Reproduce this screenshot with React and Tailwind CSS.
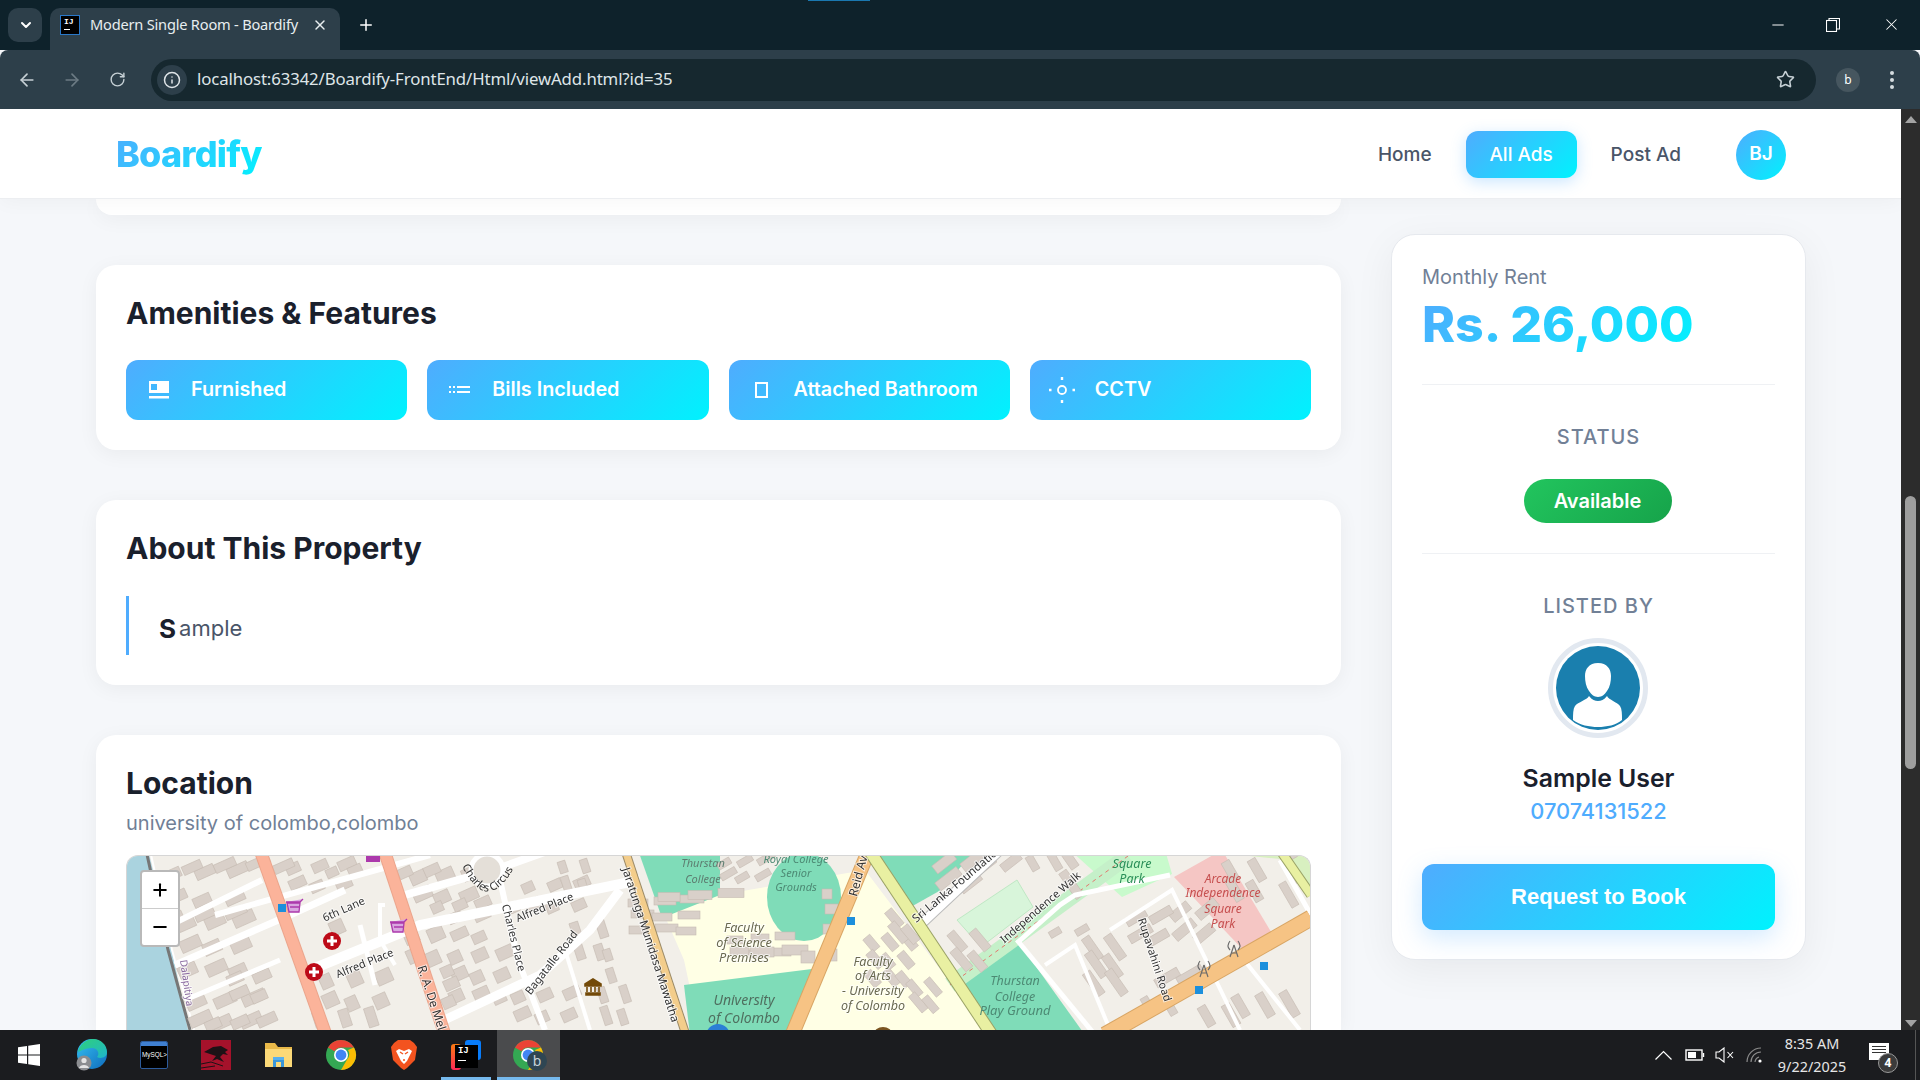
import { ArrowLeft, ArrowRight, ChevronDown, Info, Minus, Plus, RotateCw, Star, X } from "lucide-react";

const GRADIENT = "bg-[linear-gradient(135deg,#4facfe_0%,#00f2fe_100%)]";

export default function App() {
  return (
    <div className="flex h-screen w-[1920px] flex-col overflow-hidden bg-[#f5f7fa] font-['Inter',sans-serif]">
      <TabStrip />
      <Toolbar />
      <div className="flex min-h-0 flex-1">
        <div className="flex min-w-0 flex-1 flex-col overflow-hidden">
          <Navbar />
          <PageBody />
        </div>
        <Scrollbar />
      </div>
      <Taskbar />
    </div>
  );
}

function TabStrip() {
  return (
    <div className="relative flex h-[50px] shrink-0 items-end bg-[#0e222b] pl-2 font-['Noto_Sans',sans-serif] text-white">
      <div className="absolute left-[808px] top-0 h-px w-[62px] bg-[#1a78b0]" />
      <div className="mb-2 flex h-[34px] w-[34px] items-center justify-center rounded-[10px] bg-[#2d3f4a] pl-[2px]">
        <ChevronDown size={16} strokeWidth={3} />
      </div>
      <div className="ml-2 flex h-[42px] w-[290px] items-center rounded-t-[10px] bg-[#2d3f4a] pb-[8px] pl-[10px]">
        <IjFavicon />
        <span className="ml-[10px] w-[222px] whitespace-nowrap text-[14.6px] tracking-[-0.2px] text-[#e8eef0]">
          Modern Single Room - Boardify
        </span>
        <X size={16} strokeWidth={2.2} className="text-[#e8eef0]" />
      </div>
      <Plus size={18} strokeWidth={2} className="mb-[16px] ml-[17px]" />
      <div className="mb-[16px] ml-auto flex items-center">
        <Minus size={18} strokeWidth={1.3} className="mr-[39px]" />
        <svg width="14" height="14" viewBox="0 0 14 14" fill="none" stroke="white" strokeWidth="1.1" className="mr-[42px]">
          <rect x="0.5" y="2.5" width="10" height="11" />
          <path d="M3 2.5V0.5H13.5V11H10.5" />
        </svg>
        <X size={19} strokeWidth={1.3} className="mr-[19px]" />
      </div>
    </div>
  );
}

function IjFavicon() {
  return (
    <div className="flex h-5 w-5 flex-col border border-[#2a78c8] bg-black px-[3px] pt-px">
      <span className="font-['Liberation_Mono',monospace] text-[8px] font-bold leading-[9px] text-white">IJ</span>
      <span className="mt-[3px] h-px w-[6px] bg-white" />
    </div>
  );
}

function Toolbar() {
  return (
    <div className="flex h-[59px] shrink-0 items-center rounded-t-[8px] bg-[#2d3f4a] font-['Noto_Sans',sans-serif]">
      <ArrowLeft size={20} strokeWidth={2} className="ml-[17px] text-[#c6d0d5]" />
      <ArrowRight size={20} strokeWidth={2} className="ml-[25px] text-[#6c7b84]" />
      <RotateCw size={17} strokeWidth={2} className="ml-[27px] text-[#c6d0d5]" />
      <div className="ml-[25px] flex h-[42px] w-[1665px] items-center rounded-full bg-[#16282f] pl-[6px]">
        <div className="flex h-[30px] w-[30px] items-center justify-center rounded-full bg-[#2d3f4a]">
          <Info size={18} strokeWidth={2} className="text-[#dfe5e8]" />
        </div>
        <span className="ml-[10px] whitespace-nowrap pb-[2px] text-[16.8px] tracking-[-0.12px] text-[#dfe5e8]">
          localhost:63342/Boardify-FrontEnd/Html/viewAdd.html?id=35
        </span>
        <Star size={19} strokeWidth={2} className="ml-auto mr-[21px] text-[#c6d0d5]" />
      </div>
      <div className="ml-[20px] flex h-6 w-6 items-center justify-center rounded-full bg-[#46565f] text-[12px] text-white">b</div>
      <div className="ml-[30px] flex flex-col gap-[3px]">
        <span className="h-[4px] w-[4px] rounded-full bg-[#d5dcdf]" />
        <span className="h-[4px] w-[4px] rounded-full bg-[#d5dcdf]" />
        <span className="h-[4px] w-[4px] rounded-full bg-[#d5dcdf]" />
      </div>
    </div>
  );
}

function Navbar() {
  return (
    <nav className="z-10 flex h-[90px] shrink-0 items-center border-b border-[#eceef1] bg-white pl-[116px] pr-[115px] pt-[2px] shadow-[0_2px_20px_rgba(0,0,0,0.04)]">
      <span className={`${GRADIENT} -mt-[2px] bg-clip-text text-[36px] font-extrabold tracking-[-0.8px] text-transparent`}>Boardify</span>
      <div className="ml-auto flex items-center text-[19px] font-medium text-[#4a5568]">
        <span className="pt-[2px]">Home</span>
        <span className={`${GRADIENT} ml-[34px] flex h-[47px] w-[111px] items-center justify-center rounded-[12px] pt-[2px] text-white shadow-[0_4px_15px_rgba(79,172,254,0.3)]`}>
          All Ads
        </span>
        <span className="ml-[34px] pt-[2px]">Post Ad</span>
        <span className={`${GRADIENT} ml-[55px] flex h-[50px] w-[50px] items-center justify-center rounded-full font-semibold text-white`}>BJ</span>
      </div>
    </nav>
  );
}

function PageBody() {
  return (
    <div className="flex min-h-0 flex-1 items-start pl-[96px]">
      <div className="flex w-[1245px] flex-col gap-[50px]">
        <div className="h-4 rounded-b-[20px] bg-white shadow-[0_4px_20px_rgba(0,0,0,0.05)]" />
        <Amenities />
        <About />
        <LocationCard />
      </div>
      <Sidebar />
    </div>
  );
}

function Card({ children }) {
  return <section className="rounded-[20px] bg-white p-[30px] shadow-[0_4px_20px_rgba(0,0,0,0.05)]">{children}</section>;
}

function Heading({ children }) {
  return <h2 className="h-[35px] text-[30px] font-bold leading-[36px] text-[#1a202c]">{children}</h2>;
}

function Amenities() {
  const items = [
    { name: "Furnished", icon: <FurnishedGlyph /> },
    { name: "Bills Included", icon: <BillsGlyph /> },
    { name: "Attached Bathroom", icon: <BathGlyph /> },
    { name: "CCTV", icon: <CctvGlyph /> },
  ];
  return (
    <Card>
      <Heading>Amenities &amp; Features</Heading>
      <div className="mt-[30px] grid grid-cols-4 gap-5">
        {items.map((x) => (
          <div key={x.name} className={`${GRADIENT} flex h-[60px] items-center rounded-[12px] text-[19.8px] font-semibold text-white`}>
            <span className="flex w-[65px] shrink-0 justify-center">{x.icon}</span>
            {x.name}
          </div>
        ))}
      </div>
    </Card>
  );
}

function FurnishedGlyph() {
  return (
    <svg width="20" height="18" viewBox="0 0 20 18" fill="white">
      <path fillRule="evenodd" d="M0 0H20V12H0ZM2 3V9H8V3Z" />
      <rect y="15" width="20" height="2.5" />
    </svg>
  );
}

function BillsGlyph() {
  return (
    <svg width="21" height="8" viewBox="0 0 21 8" fill="white">
      <rect x="0" y="0" width="2" height="2" />
      <rect x="0" y="5" width="2" height="2" />
      <rect x="4" y="0" width="2" height="2" />
      <rect x="4" y="5" width="2" height="2" />
      <rect x="8" y="0" width="13" height="2" />
      <rect x="8" y="5" width="13" height="2" />
    </svg>
  );
}

function BathGlyph() {
  return (
    <svg width="13" height="16" viewBox="0 0 13 16" fill="none" stroke="white" strokeWidth="2">
      <rect x="1" y="1" width="11" height="14" />
    </svg>
  );
}

function CctvGlyph() {
  return (
    <svg width="26" height="26" viewBox="0 0 26 26" fill="none" stroke="white">
      <circle cx="13" cy="13" r="4" strokeWidth="1.8" />
      <path d="M13 0V3M13 23V26M0 13H2.5M23.5 13H26" strokeWidth="2.4" />
    </svg>
  );
}

function About() {
  return (
    <Card>
      <Heading>About This Property</Heading>
      <div className="mt-[31px] flex h-[59px] items-center border-l-[3px] border-[#4facfe] pl-[30px] pt-[6px] text-[22px] text-[#4a5568]">
        <span className="mr-[3px] text-[26px] font-bold text-[#1a202c]">S</span>ample
      </div>
    </Card>
  );
}

function LocationCard() {
  return (
    <section className="rounded-t-[20px] bg-white px-[30px] pt-[30px] shadow-[0_4px_20px_rgba(0,0,0,0.05)]">
      <Heading>Location</Heading>
      <p className="mt-[10px] h-[26px] text-[20px] leading-[26px] text-[#718096]">university of colombo,colombo</p>
      <MapView />
    </section>
  );
}

function Sidebar() {
  return (
    <aside className="ml-[50px] mt-[35px] flex w-[415px] flex-col rounded-[24px] border border-[#e6e9ee] bg-white px-[30px] py-[29px] shadow-[0_10px_40px_rgba(0,0,0,0.06)]">
      <div className="h-[26px] text-[20px] leading-[26px] text-[#718096]">Monthly Rent</div>
      <div className={`${GRADIENT} mt-1 h-[60px] w-fit bg-clip-text text-[50px] font-extrabold leading-[60px] text-transparent`}>Rs. 26,000</div>
      <div className="mt-[30px] border-t border-[#eff1f4]" />
      <div className="mt-10 h-6 text-center text-[20px] font-medium leading-6 tracking-[1px] text-[#718096]">STATUS</div>
      <div className="mt-[30px] flex justify-center pr-[2px]">
        <span className="flex h-[44px] w-[148px] items-center justify-center rounded-full bg-[linear-gradient(135deg,#22c55e,#16a34a)] text-[20px] font-semibold text-white">
          Available
        </span>
      </div>
      <div className="mt-[30px] border-t border-[#eff1f4]" />
      <div className="mt-10 h-6 text-center text-[20px] font-medium leading-6 tracking-[1px] text-[#718096]">LISTED BY</div>
      <div className="mt-5 flex justify-center pr-[2px]">
        <Avatar />
      </div>
      <div className="mt-6 h-8 text-center text-[24.8px] font-semibold leading-8 text-[#1a202c]">Sample User</div>
      <div className="mt-[3px] h-7 text-center text-[21.8px] font-medium leading-7 text-[#4facfe]">07074131522</div>
      <button className={`${GRADIENT} mt-[39px] h-[66px] rounded-[12px] pb-[2px] font-['Liberation_Sans',sans-serif] text-[22px] font-bold text-white shadow-[0_8px_25px_rgba(79,172,254,0.25)]`}>
        Request to Book
      </button>
    </aside>
  );
}

function Avatar() {
  return (
    <div className="h-[100px] w-[100px] rounded-full border-[5px] border-[#e2e8f0] bg-white p-[3px]">
      <svg viewBox="0 0 84 84" className="h-full w-full">
        <circle cx="42" cy="42" r="42" fill="#1a7fae" />
        <path
          fill="white"
          d="M42 17C33 17 29 23 29 30C29 35 30 41 33 45C35 48 38 51 42 51C46 51 49 48 51 45C54 41 55 35 55 30C55 23 51 17 42 17Z"
        />
        <path
          fill="white"
          d="M33 50C31 54 22 56 19 60C17 63 17 68 17 74C24 79 33 81 42 81C51 81 60 79 66 74C66 68 66 63 64 60C61 56 53 54 51 50C48 54 45 55 42 55C39 55 36 54 33 50Z"
        />
      </svg>
    </div>
  );
}

function Scrollbar() {
  return (
    <div className="flex w-[19px] shrink-0 flex-col items-center bg-[#2c2c2c]">
      <div className="mt-[7px] h-0 w-0 border-x-[6px] border-b-[7px] border-x-transparent border-b-[#a3a3a3]" />
      <div className="mt-[373px] h-[273px] w-[11px] rounded-full bg-[#9e9e9e]" />
      <div className="mt-auto mb-[3px] h-0 w-0 border-x-[6px] border-t-[7px] border-x-transparent border-t-[#a3a3a3]" />
    </div>
  );
}

function MapView() {
  return (
    <div className="relative mt-[19px] h-[175px] overflow-hidden rounded-t-[12px] border-x border-t border-[#d6d6d6] bg-[#f2efe9]">
      <MapDrawing />
      <div className="absolute left-[13px] top-[14px] flex h-[77px] w-[40px] flex-col rounded-[4px] border-2 border-[#b9b9b9] bg-white font-['Liberation_Sans',sans-serif] text-black">
        <div className="flex flex-1 items-center justify-center border-b border-[#ccc]">
          <Plus size={20} strokeWidth={2.4} />
        </div>
        <div className="flex flex-1 items-center justify-center">
          <Minus size={20} strokeWidth={2.4} />
        </div>
      </div>
    </div>
  );
}

// each cluster: cx, cy, cols, rows, step x, step y, angle, w, h
const buildingClusters = [
  [205, 885, 3, 2, 30, 26, -24, 20, 10],
  [215, 945, 3, 3, 26, 24, -24, 20, 12],
  [225, 1010, 3, 2, 26, 20, -24, 22, 11],
  [320, 875, 3, 2, 24, 18, -24, 16, 10],
  [355, 990, 3, 2, 26, 22, -24, 14, 14],
  [345, 1018, 3, 1, 24, 18, 72, 18, 10],
  [445, 885, 3, 2, 24, 20, -24, 18, 12],
  [425, 945, 2, 2, 22, 22, -24, 16, 14],
  [470, 925, 2, 2, 24, 20, -24, 16, 10],
  [480, 975, 3, 3, 22, 20, -24, 15, 12],
  [555, 895, 3, 2, 24, 20, -24, 14, 10],
  [590, 940, 2, 2, 24, 22, 72, 18, 9],
  [545, 1005, 3, 2, 24, 20, -24, 15, 11],
  [615, 1005, 2, 2, 20, 22, 72, 18, 8],
  [665, 915, 3, 3, 24, 14, 0, 22, 8],
  [760, 945, 3, 2, 22, 14, 0, 18, 8],
  [745, 868, 3, 2, 18, 14, -30, 16, 7],
  [890, 960, 3, 3, 16, 18, 50, 18, 9],
  [960, 870, 2, 2, 26, 20, -38, 26, 10],
  [970, 950, 2, 2, 20, 20, 50, 24, 9],
  [1070, 870, 1, 2, 18, 30, 55, 30, 9],
  [1070, 930, 2, 1, 24, 20, -30, 14, 7],
  [1105, 965, 2, 3, 20, 18, 55, 28, 9],
  [1195, 920, 2, 2, 24, 22, -40, 24, 10],
  [1180, 975, 2, 1, 20, 20, -30, 28, 9],
  [1245, 880, 2, 2, 24, 20, 60, 24, 9],
  [1290, 870, 1, 3, 16, 24, 60, 28, 8],
  [1265, 1005, 3, 1, 22, 20, 60, 26, 9],
  [1220, 1015, 2, 1, 22, 20, 60, 24, 9],
  [240, 865, 4, 1, 30, 10, -24, 22, 9],
  [205, 915, 3, 1, 28, 10, -24, 20, 8],
  [250, 985, 2, 2, 24, 18, -24, 18, 10],
  [240, 1022, 3, 1, 24, 10, -24, 18, 10],
  [345, 870, 2, 1, 20, 10, -24, 14, 9],
  [340, 925, 1, 1, 10, 10, -24, 16, 14],
  [420, 870, 2, 1, 24, 10, -24, 16, 10],
  [460, 905, 3, 1, 20, 10, -24, 14, 10],
  [450, 985, 1, 3, 10, 16, -24, 14, 11],
  [525, 905, 2, 1, 16, 10, -24, 12, 10],
  [575, 875, 2, 2, 20, 18, 72, 14, 8],
  [610, 965, 1, 2, 10, 22, 72, 14, 8],
  [700, 895, 3, 1, 28, 10, 0, 24, 9],
  [780, 950, 2, 1, 30, 10, 0, 26, 10],
  [830, 910, 1, 3, 10, 18, 0, 12, 10],
  [820, 955, 2, 1, 18, 10, 0, 16, 12],
  [905, 925, 2, 2, 16, 16, 50, 22, 9],
  [925, 995, 2, 2, 16, 16, 50, 20, 8],
  [1000, 862, 2, 1, 22, 10, -38, 22, 9],
  [1045, 862, 2, 1, 20, 10, 60, 18, 8],
  [1150, 925, 2, 2, 22, 20, -30, 24, 9],
  [1160, 1005, 2, 1, 18, 10, 60, 22, 8],
];

function Buildings() {
  const out = [];
  buildingClusters.forEach(([cx, cy, cols, rows, dx, dy, angle, w, h], c) => {
    for (let i = 0; i < cols; i++) {
      for (let j = 0; j < rows; j++) {
        const jitter = ((i * 7 + j * 13 + c * 5) % 5) - 2;
        const x = cx + (i - (cols - 1) / 2) * dx + jitter;
        const y = cy + (j - (rows - 1) / 2) * dy - jitter;
        out.push(
          <rect
            key={`${c}-${i}-${j}`}
            x={x - w / 2}
            y={y - h / 2}
            width={w + jitter}
            height={h}
            fill="#d9d0c9"
            stroke="#c6bbb2"
            strokeWidth="0.6"
            transform={`rotate(${angle} ${x} ${y})`}
          />,
        );
      }
    }
  });
  return <g>{out}</g>;
}

function Road({ d, w, color = "#fff", edge }) {
  return (
    <>
      {edge && <path d={d} fill="none" stroke={edge} strokeWidth={w + 2} />}
      <path d={d} fill="none" stroke={color} strokeWidth={w} />
    </>
  );
}

function Label({ x, y, rot = 0, size = 11, fill = "#333", italic, halo = true, children }) {
  return (
    <text
      x={x}
      y={y}
      transform={rot ? `rotate(${rot} ${x} ${y})` : undefined}
      textAnchor="middle"
      dominantBaseline="middle"
      fontSize={size}
      fontStyle={italic ? "italic" : "normal"}
      fill={fill}
      stroke={halo ? "rgba(255,255,255,0.7)" : "none"}
      strokeWidth={halo ? 2 : 0}
      paintOrder="stroke"
      fontFamily="'Noto Sans', sans-serif"
    >
      {children}
    </text>
  );
}

function MapDrawing() {
  const green = "#7fdcb8";
  const campus = "#ffffe5";
  const orange = "#f6c384";
  return (
    <svg viewBox="127 856 1183 174" className="block h-[174px] w-[1183px] blur-[0.5px]">
      <rect x="126" y="856" width="1185" height="174" fill="#f2efe9" />
      {/* water and railway */}
      <path d="M120 850H148L172 950L188 1030H120Z" fill="#aad3df" />
      <path d="M146 850L168 950L190 1030" fill="none" stroke="#777" strokeWidth="3" />
      <path d="M150 850L172 950L194 1030" fill="none" stroke="#fff" strokeWidth="2" />

      {/* campus and green areas */}
      <path d="M660 905L865 870L990 1035H700L684 960Z" fill={campus} />
      <path d="M638 850H720V895L662 918Z" fill={green} />
      <ellipse cx="804" cy="897" rx="37" ry="44" fill={green} />
      <path d="M881 850H975L941 890L909 908L881 873Z" fill={green} />
      <path d="M684 985L820 968L796 1035H690Z" fill={green} />
      <path d="M961 987L1017 940L1085 1035H989Z" fill={green} />
      <path d="M957 920L1017 880L1033 907L981 947Z" fill="#d8f5da" stroke="#bfe8c4" />
      <path d="M1070 850H1165L1172 874L1122 897Z" fill="#c8facc" />
      <path d="M950 985L1128 856" fill="none" stroke="#c5f0c9" strokeWidth="16" />
      <path d="M950 985L1128 856" fill="none" stroke="#e2786e" strokeWidth="1" strokeDasharray="4 4" />
      <path d="M1174 877L1222 850L1276 940L1246 953Z" fill="#f5c6c4" />
      <path d="M1240 855H1311V890L1290 860Z" fill="#d8f0c0" />

      <Buildings />

      {/* minor streets */}
      <Road d="M150 935L262 880M215 915L430 855" w={6} />
      <Road d="M175 965L290 915L345 890" w={7} />
      <Road d="M185 1000L280 960" w={5} />
      <Road d="M315 968L420 925L640 880" w={10} />
      <Road d="M385 905H380V940L395 965" w={4} />
      <Road d="M360 925L375 985" w={5} />
      <Road d="M405 895L500 868L550 850" w={8} />
      <Road d="M500 880L518 960L545 1030" w={6} />
      <Road d="M440 1022L540 975L590 930L620 890" w={9} />
      <Road d="M565 950L590 1030" w={4} />
      <Road d="M420 960L445 1030" w={4} />
      <Road d="M1017 943L1060 905L1075 895L1170 875" w={5} />
      <Road d="M1017 940L1095 1035" w={5} />
      <Road d="M1045 965L1075 945L1110 1030" w={4} />
      <Road d="M1110 930L1172 890L1240 1030" w={4} />
      <Road d="M1280 860L1311 915" w={5} />
      <Road d="M1240 955L1300 1030" w={4} />
      <Road d="M920 925L1000 850" w={9} color="#fff" edge="#bbb" />
      <circle cx="487" cy="870" r="16" fill="#e4dfd8" stroke="#fff" strokeWidth="5" />

      {/* main roads */}
      <Road d="M260 850L326 1035" w={11} color="#fbb39a" edge="#eba58c" />
      <Road d="M384 850L445 1035" w={11} color="#fbb39a" edge="#eba58c" />
      <Road d="M625 850L686 1035" w={7} color="#f3cd8b" edge="#9b8a66" />
      <Road d="M869 850L792 1035" w={13} color={orange} edge="#d8a564" />
      <Road d="M869 850L992 1035" w={11} color="#e9f0a2" edge="#9aa266" />
      <Road d="M1105 1035L1311 918" w={15} color={orange} edge="#d8a564" />
      <Road d="M1280 850L1311 895" w={8} color="#e9f0a2" edge="#9aa266" />

      {/* street labels */}
      <Label x={344} y={910} rot={-24}>6th Lane</Label>
      <Label x={545} y={908} rot={-22}>Alfred Place</Label>
      <Label x={365} y={964} rot={-22}>Alfred Place</Label>
      <Label x={513} y={938} rot={76}>Charles Place</Label>
      <Label x={552} y={963} rot={-52}>Bagatalle Road</Label>
      <Label x={431} y={998} rot={72} size={12}>R. A. De Mel</Label>
      <Label x={650} y={945} rot={72} size={11.5}>Jaratunga Munidasa Mawatha</Label>
      <Label x={859} y={876} rot={-75} size={12}>Reid Av</Label>
      <Label x={958} y={884} rot={-40} size={11.5}>Sri Lanka Foundation</Label>
      <Label x={1041} y={908} rot={-41}>Independence Walk</Label>
      <Label x={1154} y={960} rot={72}>Rupavahini Road</Label>
      <Label x={186} y={983} rot={82} size={10} fill="#8a6aa0">Dalapitiya</Label>
      <path id="circus" d="M462 866Q488 918 516 864" fill="none" />
      <text fontSize="11" fill="#333" fontFamily="'Noto Sans', sans-serif">
        <textPath href="#circus">Charles Circus</textPath>
      </text>

      {/* place labels */}
      <g>
        <Label x={703} y={864} italic fill="#5d7d70" halo={false}>Thurstan</Label>
        <Label x={703} y={880} italic fill="#5d7d70" halo={false}>College</Label>
        <Label x={796} y={860} italic fill="#4d8a74" halo={false}>Royal College</Label>
        <Label x={796} y={874} italic fill="#4d8a74" halo={false}>Senior</Label>
        <Label x={796} y={888} italic fill="#4d8a74" halo={false}>Grounds</Label>
        <Label x={744} y={929} size={12.7} italic fill="#6a6a50">Faculty</Label>
        <Label x={744} y={944} size={12.7} italic fill="#6a6a50">of Science</Label>
        <Label x={744} y={959} size={12.7} italic fill="#6a6a50">Premises</Label>
        <Label x={873} y={963} size={12.5} italic fill="#6a6a50">Faculty</Label>
        <Label x={873} y={977} size={12.5} italic fill="#6a6a50">of Arts</Label>
        <Label x={873} y={992} size={12.5} italic fill="#6a6a50">- University</Label>
        <Label x={873} y={1007} size={12.5} italic fill="#6a6a50">of Colombo</Label>
        <Label x={744} y={1001} size={14} italic fill="#4f6f5f" halo={false}>University</Label>
        <Label x={744} y={1019} size={14} italic fill="#4f6f5f" halo={false}>of Colombo</Label>
        <Label x={1015} y={982} size={12.5} italic fill="#4d8a74" halo={false}>Thurstan</Label>
        <Label x={1015} y={998} size={12.5} italic fill="#4d8a74" halo={false}>College</Label>
        <Label x={1015} y={1012} size={13} italic fill="#4d8a74" halo={false}>Play Ground</Label>
        <Label x={1132} y={865} size={12.5} italic fill="#2a8f58" halo={false}>Square</Label>
        <Label x={1132} y={880} size={12.5} italic fill="#2a8f58" halo={false}>Park</Label>
        <Label x={1223} y={880} size={12} italic fill="#c64f4f" halo={false}>Arcade</Label>
        <Label x={1223} y={894} size={12} italic fill="#c64f4f" halo={false}>Independence</Label>
        <Label x={1223} y={910} size={12} italic fill="#c64f4f" halo={false}>Square</Label>
        <Label x={1223} y={925} size={12} italic fill="#c64f4f" halo={false}>Park</Label>
      </g>

      {/* pois */}
      {[[282, 908], [851, 921], [1199, 990], [1264, 966]].map(([x, y]) => (
        <rect key={x} x={x - 4} y={y - 4} width="8" height="8" fill="#1c8fdc" />
      ))}
      {[[332, 941], [314, 972]].map(([x, y]) => (
        <g key={x}>
          <circle cx={x} cy={y} r="9" fill="#bd0a17" />
          <path d={`M${x - 5} ${y}H${x + 5}M${x} ${y - 5}V${y + 5}`} stroke="white" strokeWidth="3" />
        </g>
      ))}
      {[[294, 908], [398, 928]].map(([x, y]) => (
        <path key={x} d={`M${x - 8} ${y - 6}H${x + 6}L${x + 9} ${y - 9}M${x - 7} ${y - 5}L${x - 5} ${y + 4}H${x + 5}L${x + 6} ${y - 5}ZM${x - 4} ${y - 1}H${x + 5}`} fill="#d9a6e0" stroke="#ac39ac" strokeWidth="1.3" />
      ))}
      <rect x="366" y="855" width="14" height="7" fill="#ac39ac" />
      <path d="M585 984L593 979L601 984V986H585ZM586 993H600V995H586ZM587 987V992M591 987V992M595 987V992M599 987V992" fill="#734a08" stroke="#734a08" strokeWidth="1.6" />
      {[[1204, 968], [1234, 948]].map(([x, y]) => (
        <g key={x} fill="none" stroke="#6b6b6b" strokeWidth="1.2">
          <path d={`M${x} ${y - 3}L${x - 4} ${y + 9}M${x} ${y - 3}L${x + 4} ${y + 9}M${x - 3} ${y + 5}H${x + 3}`} />
          <path d={`M${x - 4} ${y - 7}Q${x - 8} ${y - 2} ${x - 4} ${y + 2}M${x + 4} ${y - 7}Q${x + 8} ${y - 2} ${x + 4} ${y + 2}`} />
        </g>
      ))}
      <circle cx="718" cy="1036" r="12" fill="#2b7fd6" />
      <ellipse cx="883" cy="1034" rx="9" ry="7" fill="#7a5420" />
    </svg>
  );
}

function Taskbar() {
  return (
    <div className="flex h-[50px] shrink-0 items-stretch bg-[#1b1c1f] font-['Noto_Sans',sans-serif] text-white">
      <div className="-ml-[2px] flex">
        <TaskIcon><WindowsLogo /></TaskIcon>
        <TaskIcon><EdgeIcon /></TaskIcon>
        <TaskIcon><MysqlIcon /></TaskIcon>
        <TaskIcon><DragonIcon /></TaskIcon>
        <TaskIcon><FolderIcon /></TaskIcon>
        <TaskIcon><ChromeIcon /></TaskIcon>
        <TaskIcon><BraveIcon /></TaskIcon>
        <TaskIcon underline="open"><IdeaIcon /></TaskIcon>
        <TaskIcon underline="active"><ChromeIcon badge /></TaskIcon>
      </div>
      <div className="ml-auto flex items-center">
        <svg width="17" height="10" viewBox="0 0 17 10" fill="none" stroke="white" strokeWidth="1.2">
          <path d="M0.5 9.5L8.5 1.5L16.5 9.5" />
        </svg>
        <svg width="20" height="12" viewBox="0 0 20 12" className="ml-[13px]" fill="none" stroke="white" strokeWidth="1.4">
          <rect x="1" y="1" width="16" height="10" />
          <rect x="3" y="3" width="8" height="6" fill="white" stroke="none" />
          <path d="M18.5 4V8" />
        </svg>
        <svg width="19" height="16" viewBox="0 0 19 16" className="ml-[10px]" fill="none" stroke="white" strokeWidth="1.1">
          <path d="M1 5H4L9 1V15L4 11H1Z" />
          <path d="M12.5 5L18 11M18 5L12.5 11" />
        </svg>
        <svg width="18" height="16" viewBox="0 0 18 16" className="ml-[12px]" fill="none" stroke="#8c8c8c" strokeWidth="1.2">
          <path d="M1 15A14 14 0 0 1 15 1M5 15A10 10 0 0 1 15 5M9 15A6 6 0 0 1 13 10" />
          <circle cx="14" cy="14" r="1.6" fill="white" stroke="none" />
        </svg>
        <div className="ml-[9px] flex w-[78px] flex-col items-center text-[14.4px] leading-[23px] text-[#e6e6e6]">
          <span>8:35 AM</span>
          <span>9/22/2025</span>
        </div>
        <div className="relative ml-[18px] h-[24px] w-[20px]">
          <div className="absolute left-0 top-0 flex h-[17px] w-[20px] flex-col gap-[2px] bg-white px-[3px] pt-[3px]">
            <span className="h-px bg-[#333]" />
            <span className="h-px bg-[#333]" />
            <span className="h-px bg-[#333]" />
          </div>
          <span className="absolute left-[9px] top-[10px] flex h-[20px] w-[20px] items-center justify-center rounded-full border border-[#999] bg-[#3b3b3b] text-[12px] font-bold">4</span>
        </div>
        <div className="ml-[26px] mr-1 h-full w-px bg-[#555]" />
      </div>
    </div>
  );
}

function TaskIcon({ children, underline }) {
  return (
    <div className={`relative flex w-[62.4px] items-center justify-center ${underline === "active" ? "bg-[#4a4b4d]" : ""}`}>
      {children}
      {underline === "open" && <span className="absolute bottom-0 left-[6px] h-[3px] w-[50px] bg-[#76b9ed]" />}
      {underline === "active" && <span className="absolute bottom-0 left-0 h-[3px] w-full bg-[#76b9ed]" />}
    </div>
  );
}

function WindowsLogo() {
  return (
    <svg width="22" height="22" viewBox="0 0 22 22" fill="white">
      <path d="M0 3.2L9 2V10.4H0ZM10.2 1.8L22 0V10.4H10.2ZM0 11.6H9V20L0 18.8ZM10.2 11.6H22V22L10.2 20.2Z" />
    </svg>
  );
}

function EdgeIcon() {
  return (
    <svg width="32" height="32" viewBox="0 0 32 32">
      <defs>
        <linearGradient id="edgeA" x1="0" y1="0" x2="1" y2="1">
          <stop offset="0" stopColor="#35c1f1" />
          <stop offset="1" stopColor="#0f6cbd" />
        </linearGradient>
        <linearGradient id="edgeB" x1="0" y1="0" x2="1" y2="1">
          <stop offset="0" stopColor="#2fd07a" />
          <stop offset="1" stopColor="#1fb6c9" />
        </linearGradient>
      </defs>
      <circle cx="16" cy="15" r="15" fill="url(#edgeA)" />
      <path d="M2 13C4 4 12 0 17 0C25 0 31 6 31 13C31 19 24 20 21 18C24 15 22 9 16 9C9 9 5 12 2 13Z" fill="url(#edgeB)" />
      <circle cx="8" cy="24" r="7.5" fill="#8b8d90" />
      <circle cx="8" cy="21.5" r="2.6" fill="#e4e4e4" />
      <path d="M3 29C4 25 12 25 13 29Z" fill="#e4e4e4" />
    </svg>
  );
}

function MysqlIcon() {
  return (
    <div className="flex h-[28px] w-[28px] flex-col overflow-hidden rounded-[2px] border border-[#2d5b9b] bg-black">
      <div className="h-[4px] bg-[#3f7fd0]" />
      <span className="mt-[4px] whitespace-nowrap pl-px font-['Liberation_Sans',sans-serif] text-[6.4px] leading-[9px] text-white">MySQL&gt;</span>
    </div>
  );
}

function DragonIcon() {
  return (
    <svg width="30" height="30" viewBox="0 0 30 30">
      <rect width="30" height="30" fill="#a5122b" />
      <path d="M3 12L12 7L20 6L27 10L24 12L27 15L22 14L19 17L23 22L16 19L11 21L15 16L9 14Z" fill="#1d1216" />
      <path d="M0 24L10 22L22 26M0 28L14 26" stroke="#1d1216" strokeWidth="1" fill="none" />
    </svg>
  );
}

function FolderIcon() {
  return (
    <svg width="29" height="30" viewBox="0 0 29 30">
      <path d="M1 3H11L14 7H28V27H1Z" fill="#e9b949" />
      <path d="M1 9H28V27H1Z" fill="#fbd978" />
      <path d="M9 27V19H20V27H17V22H12V27Z" fill="#3a96d8" />
      <rect x="9" y="17" width="11" height="3" fill="#57b0ee" />
    </svg>
  );
}

function ChromeIcon({ badge }) {
  return (
    <svg width="30" height="30" viewBox="0 0 30 30" className="overflow-visible">
      <circle cx="15" cy="15" r="15" fill="#34a853" />
      <path d="M15 0A15 15 0 0 1 28 7.5H15A7.5 7.5 0 0 0 8.5 11.3L2 7.5A15 15 0 0 1 15 0Z" fill="#ea4335" />
      <path d="M28 7.5A15 15 0 0 1 15 30L21.5 18.8A7.5 7.5 0 0 0 22 10Z" fill="#fbbc04" />
      <circle cx="15" cy="15" r="7" fill="white" />
      <circle cx="15" cy="15" r="5.4" fill="#4285f4" />
      {badge && (
        <g>
          <circle cx="24" cy="21" r="10" fill="#2f4653" />
          <text x="24" y="26" textAnchor="middle" fontSize="14" fill="#c7d3da" fontFamily="'Noto Sans', sans-serif">b</text>
        </g>
      )}
    </svg>
  );
}

function BraveIcon() {
  return (
    <svg width="26" height="30" viewBox="0 0 26 30">
      <path d="M7 0H19L23 3L26 7L24 20L16 28L13 30L10 28L2 20L0 7L3 3Z" fill="#f3531f" />
      <path d="M8 9L13 11L18 9L21 11L18 17L16 21L13 24L10 21L8 17L5 11Z" fill="white" />
      <path d="M9 12L12 14M17 12L14 14M12 20H14" stroke="#f3531f" strokeWidth="1.4" />
    </svg>
  );
}

function IdeaIcon() {
  return (
    <div className="relative h-[30px] w-[30px]">
      <div className="absolute left-0 top-[4px] h-[26px] w-[10px] rounded-[3px] bg-[linear-gradient(180deg,#f97a12,#fe2857)]" />
      <div className="absolute right-0 top-0 h-[20px] w-[16px] rounded-[3px] bg-[#087cfa]" />
      <div className="absolute bottom-[2px] left-[4px] flex h-[23px] w-[23px] flex-col bg-black px-[3px] pt-px">
        <span className="font-['Liberation_Mono',monospace] text-[9px] font-bold leading-[10px] text-white">IJ</span>
        <span className="mt-[4px] h-px w-[8px] bg-white" />
      </div>
    </div>
  );
}
